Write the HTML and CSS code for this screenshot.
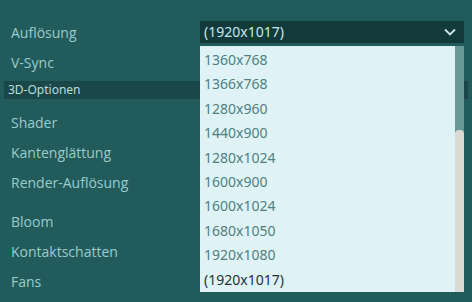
FILE: index.html
```html
<!DOCTYPE html>
<html lang="de">
<head>
<meta charset="utf-8">
<link rel="stylesheet" href="styles.css">
</head>
<body>
<div class="settings">
  <div class="row first">
    <span class="label">Auflösung</span>
    <div class="select">
      <span class="select-value">(1920x1017)</span>
      <svg class="chevron" width="12" height="8" viewBox="0 0 12 8"><path d="M1 1.5 L6 6.5 L11 1.5" fill="none" stroke="#cfe6e6" stroke-width="1.8"/></svg>
    </div>
  </div>
  <div class="row"><span class="label">V-Sync</span></div>
  <div class="section">3D-Optionen</div>
  <div class="row group"><span class="label">Shader</span></div>
  <div class="row"><span class="label">Kantenglättung</span></div>
  <div class="row"><span class="label">Render-Auflösung</span></div>
  <div class="row group"><span class="label">Bloom</span></div>
  <div class="row"><span class="label">Kontaktschatten</span></div>
  <div class="row"><span class="label">Fans</span></div>
</div>
<div class="dropdown">
  <ul class="options">
    <li>1360x768</li>
    <li>1366x768</li>
    <li>1280x960</li>
    <li>1440x900</li>
    <li>1280x1024</li>
    <li>1600x900</li>
    <li>1600x1024</li>
    <li>1680x1050</li>
    <li>1920x1080</li>
    <li class="selected">(1920x1017)</li>
  </ul>
  <div class="scrollbar"><div class="thumb"></div></div>
</div>
</body>
</html>
```
FILE: styles.css
```css
html, body {
  margin: 0;
  padding: 0;
}
body {
  width: 472px;
  height: 302px;
  overflow: hidden;
  background: #225b5c;
  font-family: "Noto Sans", "Open Sans", sans-serif;
  font-size: 14px;
  position: relative;
}
.settings {
  display: flex;
  flex-direction: column;
  padding-top: 16.5px;
}
.row {
  height: 30.2px;
  display: flex;
  align-items: center;
  padding-left: 11px;
  padding-right: 8px;
}
.row.group {
  margin-top: 8px;
}
.label {
  flex: 1;
  padding-top: 1px;
  color: #9ccbc8;
  font-family: "Open Sans", "Noto Sans", sans-serif;
  font-stretch: 90%;
}
.select {
  width: 264px;
  height: 22px;
  box-sizing: border-box;
  background: #133a3b;
  display: flex;
  align-items: center;
  justify-content: space-between;
  padding: 0 8px 0 4px;
}
.select-value {
  color: #cbe6e6;
}
.chevron {
  display: block;
}
.section {
  margin: 4px 4px 0;
  height: 18px;
  background: #1a4849;
  color: #bddcdc;
  font-size: 12px;
  line-height: 18px;
  padding-left: 4px;
}
.dropdown {
  position: absolute;
  left: 200px;
  top: 46px;
  width: 264px;
  height: 246px;
  background: #dff3f6;
  display: flex;
}
.options {
  list-style: none;
  margin: 0;
  padding: 2px 0 0 4px;
  flex: 1;
}
.options li {
  height: 24.4px;
  line-height: 24.4px;
  color: #4f7f80;
}
.options li.selected {
  color: #1b3434;
}
.scrollbar {
  width: 9px;
  background: #689896;
  display: flex;
  flex-direction: column;
  justify-content: flex-end;
}
.thumb {
  height: 162px;
  background: #d9dbd3;
  border-radius: 4px 4px 0 0;
}
```
